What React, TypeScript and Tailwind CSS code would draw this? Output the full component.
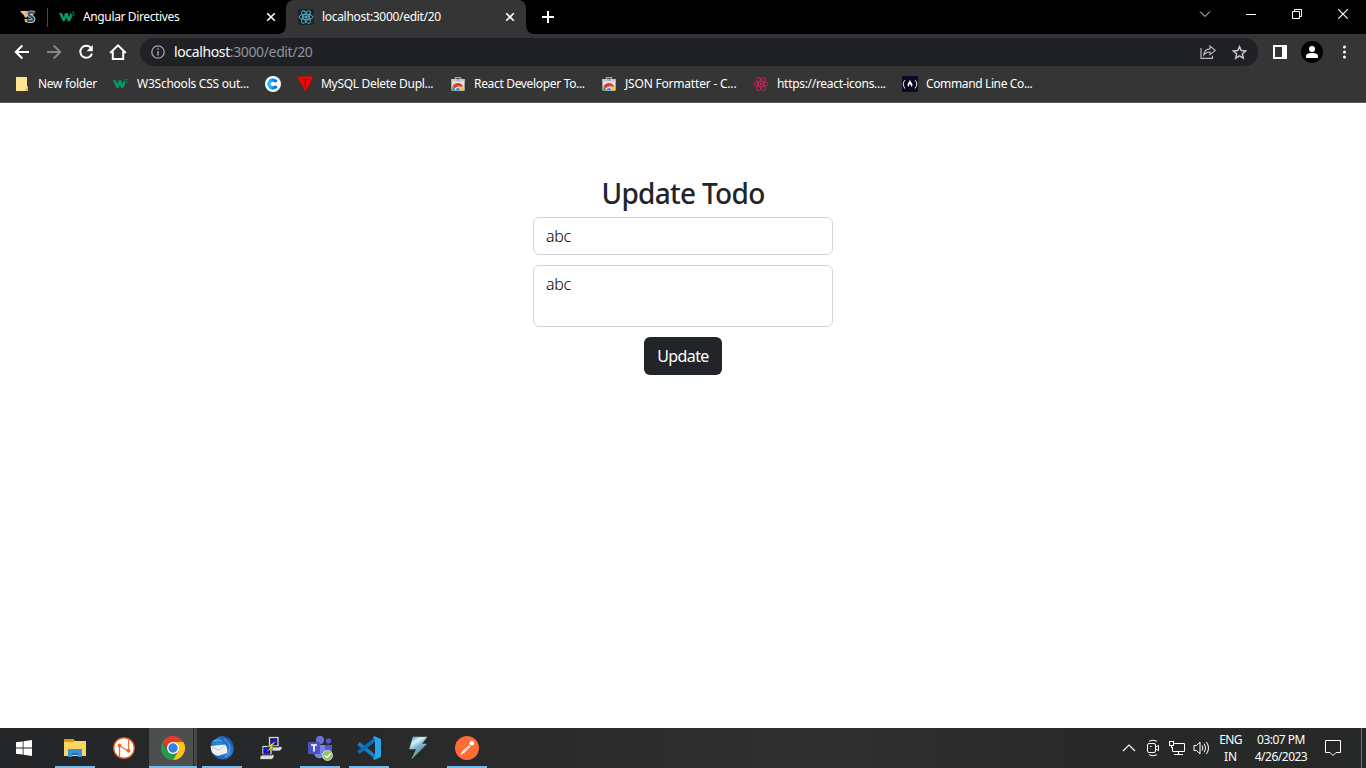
import React from "react";

const UI = "font-['Noto_Sans','Open_Sans',sans-serif]";

function W3Icon() {
  return (
    <svg width="17" height="16" viewBox="0 0 17 16" fill="none">
      <path d="M0 4 H3 L4.6 8 L6.2 4 H8.6 L10 8 L11.4 4.6 H12.8 V8.5 L11 12.2 H9 L7.2 8.4 L5.6 12.2 H3.8 Z" fill="#059862" />
      <path d="M13 3.2 h2.2 l-1.1 1.4 q1.5 0.2 1 1.4 q-0.8 0.8 -2.1 0.2" stroke="#059862" strokeWidth="0.8" />
    </svg>
  );
}

function ReactIcon({ color }: { color: string }) {
  return (
    <svg width="16" height="16" viewBox="0 0 16 16" fill="none" stroke={color} strokeWidth="0.9">
      <ellipse cx="8" cy="8" rx="7" ry="2.7" />
      <ellipse cx="8" cy="8" rx="7" ry="2.7" transform="rotate(60 8 8)" />
      <ellipse cx="8" cy="8" rx="7" ry="2.7" transform="rotate(120 8 8)" />
      <circle cx="8" cy="8" r="1.1" fill={color} />
    </svg>
  );
}

function SwiftIcon() {
  return (
    <svg width="17" height="14" viewBox="0 0 17 14" fill="none">
      <path d="M0 1 H8 L6.5 4 H2.5 Z M3 4 H7 V7.5 H5 Z M4.5 9 H7 V12.5 L5 12 Z" fill="#f5b878" />
      <path d="M14.3 3.4 C12.5 2 8.8 2 8.8 4.3 C8.8 6.8 13.6 6.4 13.4 9 C13.2 11.6 9 11.6 7 10" stroke="#f6d3a8" strokeWidth="3.9" />
      <path d="M14.3 3.4 C12.5 2 8.8 2 8.8 4.3 C8.8 6.8 13.6 6.4 13.4 9 C13.2 11.6 9 11.6 7 10" stroke="#1c5688" strokeWidth="2.3" />
    </svg>
  );
}

function CloseIcon() {
  return (
    <svg width="10" height="10" viewBox="0 0 10 10" stroke="#fff" strokeWidth="1.6">
      <path d="M1.2 1.2 L8.8 8.8 M8.8 1.2 L1.2 8.8" />
    </svg>
  );
}

function StoreIcon() {
  return (
    <svg width="16" height="16" viewBox="0 0 16 16">
      <path d="M5.5 4 V1.7 H10.5 V4" fill="none" stroke="#a6a8ab" strokeWidth="1.3" />
      <path d="M1.4 3 H14.6 V14.6 H1.4 Z" fill="#e5e6e8" />
      <path d="M1.4 3 H14.6 V5.5 H1.4 Z" fill="#c5c7ca" />
      <path d="M6.4 4 H9.6" stroke="#909296" />
      <path d="M8 14.6 L10 10.6 H13.2 Q14 12.5 13.5 14.6 Z" fill="#fbc116" />
      <path d="M2.6 10 Q4.3 7 8 7 Q11.8 7 13.3 10.6 H8 Q5.5 10.7 5 13 Z" fill="#e33b2e" />
      <path d="M2.6 10 L5.5 14.6 H2.3 Q1.9 12 2.6 10 Z" fill="#21a464" />
      <path d="M4.8 14.6 A3.2 3.2 0 0 1 11.2 14.6 Z" fill="#fff" />
      <path d="M5.4 14.6 A2.6 2.6 0 0 1 10.6 14.6 Z" fill="#3d82f0" />
    </svg>
  );
}

function TabStrip() {
  return (
    <div className="flex h-[34px] shrink-0 bg-black text-[12px] text-white">
      <div className="flex w-[47px] items-center pl-[20px]"><SwiftIcon /></div>
      <div className="mt-[8px] h-[19px] w-px bg-[#4a4a4a]" />
      <div className="flex w-[238px] items-center pl-[11px]">
        <W3Icon />
        <span className="ml-[7px] w-[183px] whitespace-nowrap leading-[34px] tracking-[-0.37px]">Angular Directives</span>
        <CloseIcon />
      </div>
      <div className="relative flex w-[240px] items-center rounded-t-[8px] bg-[#353535] pl-[12px]">
        <svg className="absolute bottom-0 -left-[8px]" width="8" height="8"><path d="M8 0 V8 H0 A8 8 0 0 0 8 0" fill="#353535" /></svg>
        <svg className="absolute -right-[8px] bottom-0" width="8" height="8"><path d="M0 0 V8 H8 A8 8 0 0 1 0 0" fill="#353535" /></svg>
        <span className="rounded-[2px] bg-[#20232a]"><ReactIcon color="#52b5ca" /></span>
        <span className="ml-[8px] w-[183px] whitespace-nowrap leading-[34px] tracking-[-0.31px]">localhost:3000/edit/20</span>
        <CloseIcon />
      </div>
      <div className="flex w-[44px] items-center justify-center">
        <svg width="12" height="12" stroke="#fff" strokeWidth="2"><path d="M6 0 V12 M0 6 H12" /></svg>
      </div>
      <div className="ml-auto flex h-[28px] w-[184px] items-center">
        <div className="flex w-[46px] justify-center"><svg width="12" height="8" fill="none" stroke="#eee"><path d="M1 1.5 L6 6.5 L11 1.5" /></svg></div>
        <div className="flex w-[46px] justify-center"><svg width="10" height="10"><rect y="5" width="10" height="1" fill="#fff" /></svg></div>
        <div className="flex w-[46px] justify-center"><svg width="10" height="10" fill="none" stroke="#fff"><path d="M0.5 2.5 H7.5 V9.5 H0.5 Z M2.5 2.5 V0.5 H9.5 V7.5 H7.5" /></svg></div>
        <div className="flex w-[46px] justify-center"><svg width="10" height="10" stroke="#fff" strokeWidth="1.2"><path d="M0.3 0.3 L9.7 9.7 M9.7 0.3 L0.3 9.7" /></svg></div>
      </div>
    </div>
  );
}

function Toolbar() {
  return (
    <div className="flex h-[36px] shrink-0 items-center bg-[#353535] pl-[6px]">
      <div className="flex w-[32px] justify-center">
        <svg width="16" height="16" fill="none" stroke="#fff" strokeWidth="2"><path d="M15 8 H2 M8.3 1.5 L1.8 8 L8.3 14.5" /></svg>
      </div>
      <div className="flex w-[32px] justify-center">
        <svg width="16" height="16" fill="none" stroke="#858585" strokeWidth="2"><path d="M1 8 H14 M7.7 1.5 L14.2 8 L7.7 14.5" /></svg>
      </div>
      <div className="flex w-[32px] justify-center">
        <svg width="16" height="16" fill="none" stroke="#fff" strokeWidth="2"><path d="M13.2 4.3 A6 6 0 1 0 14 9.6" /><path d="M14.8 1 V7.2 H8.6 Z" fill="#fff" stroke="none" /></svg>
      </div>
      <div className="flex w-[32px] justify-center">
        <svg width="18" height="18" fill="none" stroke="#fff" strokeWidth="2"><path d="M1.2 10 L9 2.3 L16.8 10 M3.8 8.5 V16 H14.2 V8.5" /></svg>
      </div>
      <div className="ml-[6px] flex h-[28px] w-[1118px] items-center rounded-full bg-[#202124] pl-[11px]">
        <svg width="14" height="14" fill="none" stroke="#a2a3a5" strokeWidth="1.3"><circle cx="7" cy="7" r="6.2" /><path d="M7 6 V10.5 M7 3.3 V4.8" strokeWidth="1.5" /></svg>
        <span className="ml-[9px] grow whitespace-nowrap text-[14px] leading-[28px] tracking-[-0.37px] text-[#8f9499]"><span className="text-white">localhost</span>:3000/edit/20</span>
        <svg className="mr-[16px]" width="16" height="16" fill="none" stroke="#b5b6b8" strokeWidth="1.2"><path d="M1 4 V14.4 H12.5 V11.8" /><path d="M3.8 11 C4 7 6.2 5 10 4.8 V2 L15.2 6.4 L10 10.6 V8 C7.2 8 5.3 8.8 3.8 11 Z" /></svg>
        <svg className="mr-[11px]" width="15" height="15" fill="none" stroke="#c4c5c6" strokeWidth="1.5"><path d="M7.5 1.6 L9.2 5.6 L13.6 6 L10.3 8.9 L11.3 13.2 L7.5 10.9 L3.7 13.2 L4.7 8.9 L1.4 6 L5.8 5.6 Z" /></svg>
      </div>
      <svg className="ml-[15px]" width="14" height="14"><path d="M0 0 H14 V14 H0 Z M2 2 V12 H9 V2 Z" fill="#fff" fillRule="evenodd" /></svg>
      <svg className="ml-[14px]" width="22" height="22"><circle cx="11" cy="11" r="11" fill="#000" /><circle cx="11" cy="8" r="3" fill="#fff" /><path d="M5 17 V15 Q5 12 11 12 Q17 12 17 15 V17 Z" fill="#fff" /></svg>
      <svg className="ml-[19px]" width="5" height="14" fill="#fff"><circle cx="2.5" cy="2" r="1.5" /><circle cx="2.5" cy="7" r="1.5" /><circle cx="2.5" cy="12" r="1.5" /></svg>
    </div>
  );
}

function Bookmark({ icon, label, box, text }: { icon: React.ReactNode; label?: string; box: string; text?: string }) {
  return (
    <div className={`flex shrink-0 items-center ${box}`}>
      <span className="flex w-[16px] shrink-0 justify-center">{icon}</span>
      {label && <span className={`ml-[8px] whitespace-nowrap ${text}`}>{label}</span>}
    </div>
  );
}

function Bookmarks() {
  return (
    <div className="flex h-[33px] shrink-0 items-center border-b border-[#5a5a5a] bg-[#353535] pb-[4px] pl-[14px] text-[12px] leading-[28px] text-white">
      <Bookmark box="w-[99px]" text="tracking-[-0.28px]" label="New folder" icon={
        <svg width="14" height="16"><path d="M1 1 H12 V10.5 H13 V15 H1 Z" fill="#ffe391" /><path d="M12 10.5 L13 10.5 V15 H10.5 V12 H12 Z" fill="#e6bd55" /></svg>} />
      <Bookmark box="w-[152px]" text="tracking-[-0.24px]" label="W3Schools CSS out..." icon={<W3Icon />} />
      <Bookmark box="w-[32px]" icon={
        <svg width="16" height="16" fill="none"><defs><linearGradient id="cg"><stop stopColor="#20c4fa" /><stop offset="1" stopColor="#0060f2" /></linearGradient></defs><circle cx="8" cy="8" r="8" fill="#fff" /><path d="M11.3 6 A4 4 0 1 0 11.3 10" stroke="url(#cg)" strokeWidth="3.4" /></svg>} />
      <Bookmark box="w-[153px]" text="tracking-[-0.3px]" label="MySQL Delete Dupl..." icon={
        <svg width="16" height="16"><path d="M0.5 0.5 H16 L8.7 16 Z" fill="#f00" /><path d="M4.5 3.3 H12 M8.3 3.3 V11.5" stroke="#542222" strokeWidth="1.3" fill="none" /></svg>} />
      <Bookmark box="w-[151px]" text="tracking-[-0.33px]" label="React Developer To..." icon={<StoreIcon />} />
      <Bookmark box="w-[152px]" text="tracking-[-0.2px]" label="JSON Formatter - C..." icon={<StoreIcon />} />
      <Bookmark box="w-[149px]" text="tracking-[-0.3px]" label="https://react-icons...." icon={<ReactIcon color="#cc2459" />} />
      <Bookmark box="w-[150px]" text="tracking-[-0.37px]" label="Command Line Co..." icon={
        <svg width="16" height="16" fill="none" stroke="#d5d5df" strokeWidth="1.1"><rect width="16" height="16" fill="#0a0a23" stroke="none" /><path d="M3 4 Q-0.5 8 3 12.5 M13 4 Q16.5 8 13 12.5" /><path d="M8 4 L5.6 8.2 Q5.3 10 6.6 11 Q6.8 9 8 8 Q9.2 9 9.4 11 Q10.8 10 10.4 8.2 Z" fill="#fff" stroke="none" /></svg>} />
    </div>
  );
}

function TodoForm() {
  return (
    <main className="flex grow flex-col items-center bg-white pt-[73px] text-[#212529]">
      <h1 className="h-[41px] whitespace-nowrap text-[28px] font-medium leading-[34px] tracking-[-0.7px]">Update Todo</h1>
      <input defaultValue="abc" className="h-[38px] w-[300px] rounded-[6px] border border-[#ced4da] px-[12px] text-[16px] font-light leading-[24px] tracking-[-0.3px] text-black outline-none" />
      <textarea defaultValue="abc" className="mt-[10px] h-[62px] w-[300px] resize-none rounded-[6px] border border-[#ced4da] px-[12px] py-[6px] text-[16px] font-light leading-[24px] tracking-[-0.3px] text-black outline-none" />
      <button className="mt-[10px] h-[38px] w-[78px] rounded-[6px] bg-[#212529] text-[16px] tracking-[-0.6px] text-white">Update</button>
    </main>
  );
}

function TaskItem({ open, children }: { open?: boolean; children: React.ReactNode }) {
  return (
    <div className="flex h-full w-[48px] flex-col items-center">
      <div className="flex h-[38px] items-center pt-[2px]">{children}</div>
      {open && <div className="h-[2px] w-[40px] bg-[#76b9ed]" />}
    </div>
  );
}

function Taskbar() {
  return (
    <div className="flex h-[40px] shrink-0 gap-px bg-[linear-gradient(90deg,#242628,#2a2a2a_40%,#303030_60%,#282828_80%,#262829)] text-[12px] text-white">
      <div className="flex w-[50px] items-center pl-[16px]">
        <svg width="16" height="16" fill="#fff"><path d="M0 2.3 L6.7 1.4 V7.5 H0 Z M7.5 1.2 L16 0 V7.5 H7.5 Z M0 8.4 H6.7 V14.6 L0 13.7 Z M7.5 8.4 H16 V16 L7.5 14.8 Z" /></svg>
      </div>
      <TaskItem open>
        <svg width="22" height="20"><path d="M0 1 H9 L11 3 H22 V18 H0 Z" fill="#fcd462" /><path d="M0 1 H9 L10.5 3 L9 4 H0 Z" fill="#dc9a09" /><path d="M4 19 V12 Q4 11 5 11 H17 Q18 11 18 12 V19 H14 V15 H8 V19 Z" fill="#3993d2" /><path d="M8 15 H14 V17 H8 Z" fill="#246fad" /></svg>
      </TaskItem>
      <TaskItem>
        <svg width="22" height="22" fill="none"><circle cx="11" cy="11" r="10.2" fill="#fff" stroke="#ec6b27" strokeWidth="1.2" /><path d="M6.5 20 V9 L15.5 14 V2" stroke="#ec6b27" strokeWidth="1.2" /><circle cx="6.5" cy="8.6" r="2" fill="#ec6b27" /><circle cx="15.5" cy="13.8" r="2" fill="#ec6b27" /></svg>
      </TaskItem>
      <div className="flex h-full w-[48px] flex-col">
        <div className="flex h-[38px]">
          <div className="flex w-[44px] items-center justify-center bg-[#4d4f4f] pt-[2px] pl-[4px]">
            <svg width="24" height="24"><path d="M12 12 L1.6 6 A12 12 0 0 1 22.4 6 Z" fill="#e33b2e" /><path d="M12 6 H22.4 A12 12 0 0 1 12 24 L17.2 15 Z" fill="#fcc31e" /><path d="M1.6 6 L6.8 15 L12 18 L17.2 15 L12 24 A12 12 0 0 1 1.6 6" fill="#249b4c" /><path d="M1.6 6 H12 V12 H6 Z" fill="#e33b2e" /><circle cx="12" cy="12" r="6" fill="#fff" /><circle cx="12" cy="12" r="4.7" fill="#347ee8" /></svg>
          </div>
          <div className="w-[4px] border-l border-[#292b2b] bg-[#454747]" />
        </div>
        <div className="h-[2px] bg-[#76b9ed]" />
      </div>
      <TaskItem open>
        <svg width="24" height="24"><defs><linearGradient id="tb" x1="1" x2="0" y2="1"><stop stopColor="#12419a" /><stop offset="0.5" stopColor="#2f88d9" /><stop offset="1" stopColor="#1b3f91" /></linearGradient></defs><path d="M1 9 Q1 4 6 3 Q8 0 13 0 Q21 1 23.5 9 Q25 18 18 22 Q10 26 4 20 Q1 17 1 9 Z" fill="url(#tb)" /><path d="M0.5 10 L15 8.5 Q18 12 17 17 L8 20 Q2 18 1.5 15 Z" fill="#eef0f1" /><path d="M1 10.5 L9 14 L15 9" stroke="#b3bac0" strokeWidth="0.8" fill="none" /><path d="M4 5 Q8 3 12 5 M14 3 Q20 6 20 13 Q19 18 15 21" stroke="#60b3ef" strokeWidth="0.9" fill="none" /></svg>
      </TaskItem>
      <TaskItem>
        <svg width="24" height="24" stroke="#222" strokeWidth="0.7"><path d="M9.5 0.5 H20 V11 H9.5 Z M10 13.5 L13 10.5 H23 V13 L20.5 15 H10 Z" fill="#dcdcdc" /><path d="M11.5 2.5 H18 V9 H11.5 Z" fill="#0a12e8" /><path d="M3 9.5 H13 V19 H3 Z M1 23.5 V20.5 L3.5 18.5 H15 V21 L13 23.5 Z" fill="#dcdcdc" /><path d="M4.7 11.5 H11 V17.5 H4.7 Z" fill="#0a12e8" /><path d="M17.5 4.5 L8.5 10.5 H12 L7 16.5 L15.5 10.5 H12.5 Z" fill="#ff0" strokeWidth="0.3" /></svg>
      </TaskItem>
      <TaskItem open>
        <svg width="26" height="26"><circle cx="13" cy="5" r="4.2" fill="#6c70d0" /><circle cx="21.5" cy="6" r="2.7" fill="#5059c9" /><path d="M17 10 H25 V17 Q24 21 19 21 Z" fill="#5059c9" /><path d="M7 10 H18 V20 Q16 24 11 23 Q7 22 7 17 Z" fill="#7b83eb" /><rect x="1" y="7" width="12" height="12" rx="1" fill="#4b53bc" /><path d="M4 10 H10 M7 10 V16.5" stroke="#fff" strokeWidth="1.7" /><circle cx="20.5" cy="20.5" r="5" fill="#92c353" stroke="#fff" strokeWidth="0.7" /><path d="M17.8 20.5 L20 22.5 L23.5 18.8" fill="none" stroke="#fff" strokeWidth="1.5" /></svg>
      </TaskItem>
      <TaskItem open>
        <svg width="24" height="24" fill="none"><path d="M1.5 7.5 L18 20.5" stroke="#1580c4" strokeWidth="3.6" /><path d="M1.5 16.5 L18 3.5" stroke="#0871b5" strokeWidth="3.6" /><path d="M17 0 L24 3 V21 L17 24 L16 22.5 L18 20.5 V3.5 L16 1.5 Z" fill="#28a3ec" /></svg>
      </TaskItem>
      <TaskItem>
        <svg width="20" height="24"><defs><linearGradient id="bolt" x2="0.5" y2="1"><stop stopColor="#317f98" /><stop offset="0.3" stopColor="#d9f3fa" /><stop offset="0.55" stopColor="#78b6c8" /><stop offset="1" stopColor="#3d8ca5" /></linearGradient></defs><path d="M5 1 H19 L13.5 8 H18.5 L4 22.5 L8.5 13 H1.5 Z" fill="url(#bolt)" stroke="#9dcbd8" strokeWidth="0.5" /></svg>
      </TaskItem>
      <TaskItem open>
        <svg width="24" height="24"><circle cx="12" cy="12" r="12" fill="#ff6c37" /><path d="M5 19.5 L8 14.5 L14 9 L15.6 10.5 L9.5 16.5 Z" fill="#fff" /><circle cx="16.8" cy="7.2" r="2.4" fill="#fff" /><path d="M9 15 L15 9.5" stroke="#e99376" strokeWidth="0.6" /></svg>
      </TaskItem>
      <div className="ml-auto flex items-center">
        <div className="flex w-[24px] justify-center"><svg width="14" height="8" fill="none" stroke="#fff" strokeWidth="1.2"><path d="M1 7 L7 1 L13 7" /></svg></div>
        <div className="flex w-[24px] justify-center"><svg width="14" height="18" fill="none" stroke="#fff"><path d="M3 2.2 Q7 0.2 11 2.2 M3 15.8 Q7 17.8 11 15.8" /><rect x="1.5" y="4.5" width="8" height="9" rx="1.5" /><path d="M9.5 8 L12.5 6.5 V11.5 L9.5 10" /><path d="M4 7.5 H5.5" /></svg></div>
        <div className="flex w-[24px] justify-center"><svg width="16" height="16" fill="none" stroke="#fff"><path d="M4.5 3.5 H15.5 V11.5 H3.5 V7 M9.5 11.5 V14.5 M5 14.5 H14" /><rect x="0.5" y="1.5" width="4" height="4" /><path d="M2.5 5.5 V8" /></svg></div>
        <div className="flex w-[24px] justify-center"><svg width="17" height="16" fill="none" stroke="#fff"><path d="M1 5.5 H3.5 L7 2 V14 L3.5 10.5 H1 Z M9 5.5 Q10.7 8 9 10.5 M11.2 3.7 Q14 8 11.2 12.3 M13.4 2 Q17.6 8 13.4 14" /></svg></div>
        <div className="flex w-[35px] flex-col items-center text-center leading-[17px]"><span className="tracking-[-0.7px]">ENG</span><span>IN</span></div>
        <div className="flex w-[66px] flex-col items-center whitespace-nowrap text-center leading-[17px] tracking-[-0.5px]"><span>03:07 PM</span><span className="leading-[18px] tracking-[-0.5px]">4/26/2023</span></div>
        <div className="flex w-[47px] justify-start pl-[11px]"><svg width="16" height="18" fill="none" stroke="#fff"><path d="M0.5 1.5 H15.5 V13.5 H11 L8 16.5 L5 13.5 H0.5 Z" /></svg></div>
        <div className="mr-[4px] h-[40px] w-px bg-[#76787a]" />
      </div>
    </div>
  );
}

export default function App() {
  return (
    <div className={`flex h-[768px] w-[1366px] flex-col overflow-hidden ${UI}`}>
      <TabStrip />
      <Toolbar />
      <Bookmarks />
      <TodoForm />
      <Taskbar />
    </div>
  );
}
